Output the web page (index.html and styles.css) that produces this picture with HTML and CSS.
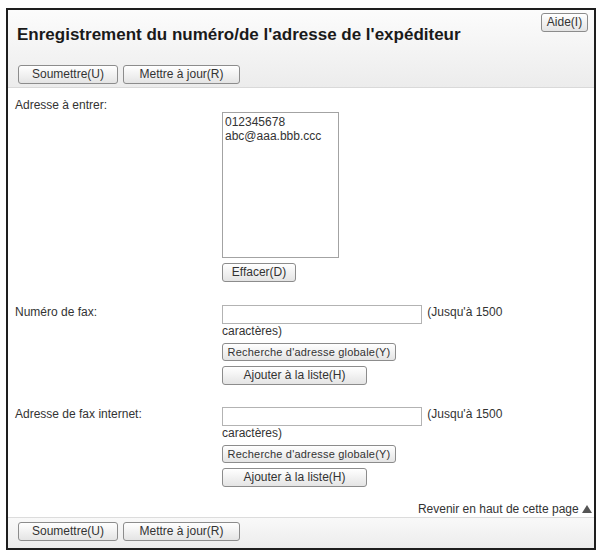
FILE: index.html
```html
<!DOCTYPE html>
<html lang="fr">
<head>
<meta charset="utf-8">
<title>Enregistrement du numéro/de l'adresse de l'expéditeur</title>
<link rel="stylesheet" href="styles.css">
</head>
<body>
<div class="frame">
  <div class="header">
    <div class="title-row">
      <h1 class="title">Enregistrement du numéro/de l'adresse de l'expéditeur</h1>
      <button class="btn btn-help">Aide(I)</button>
    </div>
    <div class="actions">
      <button class="btn btn-submit">Soumettre(U)</button>
      <button class="btn btn-update">Mettre à jour(R)</button>
    </div>
  </div>

  <div class="content">
    <div class="row">
      <div class="label">Adresse à entrer:</div>
      <div class="field">
        <textarea class="addr-list">012345678
abc@aaa.bbb.ccc</textarea>
        <button class="btn btn-clear">Effacer(D)</button>
      </div>
    </div>

    <div class="row row-fax">
      <div class="label">Numéro de fax:</div>
      <div class="field">
        <div class="limit"><input class="text-input" type="text"> (Jusqu'à 1500 caractères)</div>
        <button class="btn btn-search">Recherche d'adresse globale(Y)</button>
        <button class="btn btn-add">Ajouter à la liste(H)</button>
      </div>
    </div>

    <div class="row row-ifax">
      <div class="label">Adresse de fax internet:</div>
      <div class="field">
        <div class="limit"><input class="text-input" type="text"> (Jusqu'à 1500 caractères)</div>
        <button class="btn btn-search">Recherche d'adresse globale(Y)</button>
        <button class="btn btn-add">Ajouter à la liste(H)</button>
      </div>
    </div>

    <div class="back-top">Revenir en haut de cette page <svg class="tri" width="10" height="8" viewBox="0 0 10 8"><polygon points="5,0 10,8 0,8" fill="#555"/></svg></div>
  </div>

  <div class="footer">
    <button class="btn btn-submit">Soumettre(U)</button>
    <button class="btn btn-update">Mettre à jour(R)</button>
  </div>
</div>
</body>
</html>
```

FILE: styles.css
```css
* { box-sizing: border-box; }

html, body {
  margin: 0;
  padding: 0;
  background: #ffffff;
}

body {
  font-family: "Liberation Sans", Arial, sans-serif;
  font-size: 12px;
  line-height: 15px;
  color: #333;
}

.frame {
  margin: 8px 0 0 6px;
  width: 590px;
  height: 542px;
  border: 2px solid #1e1e1e;
  display: flex;
  flex-direction: column;
  background: #fff;
}

.header {
  background: linear-gradient(#fcfcfc, #ececec);
  border-bottom: 1px solid #d9d9d9;
  padding: 3px 6px 3px 9px;
}

.title-row {
  display: flex;
  justify-content: space-between;
  align-items: flex-start;
}

.title {
  margin: 12px 0 0 0;
  font-size: 17px;
  line-height: 20px;
  font-weight: bold;
  color: #1a1a1a;
}

.actions {
  display: flex;
  gap: 5px;
  margin-top: 20px;
  padding-left: 1px;
}

.btn {
  font-family: "Liberation Sans", Arial, sans-serif;
  font-size: 12px;
  line-height: 15px;
  height: 19px;
  padding: 0;
  border: 1px solid #8c8c8c;
  border-radius: 3px;
  background: linear-gradient(#ffffff, #e4e4e4);
  color: #333;
  display: block;
}

.btn-help { width: 47px; }
.btn-submit { width: 100px; }
.btn-update { width: 117px; }
.btn-clear { width: 74px; margin-top: 5px; }
.btn-search {
  width: 174px;
  height: 18px;
  font-size: 11px;
  letter-spacing: 0.2px;
  margin-top: 4px;
}
.btn-add { width: 145px; margin-top: 5px; }

.content {
  flex: 1;
  padding: 10px 2px 0 7px;
}

.row {
  display: grid;
  grid-template-columns: 207px 1fr;
}

.row-fax { margin-top: 23px; }
.row-ifax { margin-top: 22px; }

.addr-list {
  display: block;
  margin-top: 14px;
  width: 117px;
  height: 146px;
  border: 1px solid #a3a3a3;
  padding: 2px 2px;
  font-family: "Liberation Sans", Arial, sans-serif;
  font-size: 12px;
  line-height: 14px;
  color: #333;
  resize: none;
  overflow: hidden;
}

.limit {
  width: 300px;
  line-height: 15px;
}

.text-input {
  width: 200px;
  height: 19px;
  margin: 0 2px 0 0;
  padding: 0 2px;
  border: 1px solid #b3b3b3;
  vertical-align: top;
  font-family: "Liberation Sans", Arial, sans-serif;
  font-size: 12px;
}

.back-top {
  margin-top: 15px;
  text-align: right;
}

.tri { vertical-align: 0; }

.footer {
  background: linear-gradient(#f9f9f9, #ececec);
  border-top: 1px solid #dcdcdc;
  display: flex;
  gap: 5px;
  padding: 4px 0 0 10px;
  height: 31px;
}
```
